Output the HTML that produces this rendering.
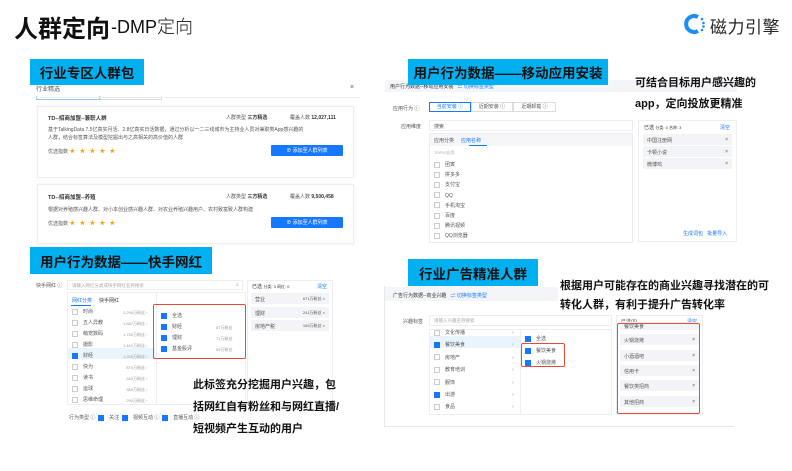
<!DOCTYPE html>
<html><head><meta charset="utf-8"><style>
*{margin:0;padding:0;box-sizing:border-box}
body{width:792px;height:471px;background:#fff;position:relative;overflow:hidden;font-family:"Liberation Sans","Noto Sans CJK SC",sans-serif;color:#333}
.a{position:absolute}
.lbl{position:absolute;background:#00b0f0;color:#111;font-weight:bold;font-size:13.5px;display:flex;align-items:center;justify-content:center}
.t{position:absolute;font-size:5px;color:#555;white-space:nowrap}
.box{position:absolute;border:1px solid #eceef2;background:#fff}
.cb{display:inline-block;width:6px;height:6px;border:1px solid #ccc;vertical-align:middle;margin-right:5px;background:#fff}
.cb.on{background:#1677ff;border-color:#1677ff}
.red{position:absolute;border:1.3px solid #e8493a;border-radius:2px}
.big{position:absolute;font-size:11px;font-weight:bold;color:#111;white-space:nowrap}
.tag{position:absolute;background:#f2f4f7;height:11px;font-size:5px;color:#555;padding:3px 4px}
.star{color:#f5a623;font-size:6px;letter-spacing:4px}
.btn{position:absolute;background:#1677ff;color:#fff;font-size:5px;display:flex;align-items:center;justify-content:center;border-radius:1px}
</style></head><body>

<div class="a" style="left:14px;top:9px;font-size:24px;font-weight:bold;color:#111">人群定向</div>
<div class="a" style="left:111px;top:13px;font-size:18px;color:#111;font-weight:300">-DMP定向</div>
<svg class="a" style="left:683px;top:13px" width="24" height="22" viewBox="0 0 24 22"><path d="M15 4 A8 8 0 1 0 15 18" fill="none" stroke="#1e8ef5" stroke-width="4"/><circle cx="19" cy="6" r="1.3" fill="#1e8ef5"/><circle cx="20.5" cy="10" r="1.3" fill="#1e8ef5"/><circle cx="20.5" cy="13.5" r="1.3" fill="#1e8ef5"/><circle cx="19" cy="17" r="1.3" fill="#1e8ef5"/></svg>
<div class="a" style="left:710px;top:13px;font-size:17px;color:#222;letter-spacing:0.5px">磁力引擎</div>

<!-- panel 1 -->
<div class="t" style="left:36px;top:84px;font-size:6px">行业精选</div>
<div class="t" style="left:350px;top:84px;font-size:7px">×</div>
<div class="a" style="left:36px;top:96px;width:64px;height:4px;border:1px solid #9cc4f0;border-top:none"></div>
<div class="a" style="left:100px;top:96px;width:62px;height:4px;border:1px solid #ddd;border-top:none"></div>
<div class="a" style="left:32px;top:97px;width:328px;height:1px;background:#eee"></div>
<div class="box" style="left:37px;top:106px;width:317px;height:72px;box-shadow:0 0 3px #eee"></div>
<div class="t" style="left:48px;top:114px;font-size:5.5px;color:#333;font-weight:bold">TD--招商加盟--兼职人群</div>
<div class="t" style="left:226px;top:114px">人群类型 <b style="color:#333">三方精选</b></div>
<div class="t" style="left:290px;top:114px">覆盖人数 <b style="color:#333">12,027,111</b></div>
<div class="t" style="left:48px;top:126px">基于TalkingData 7.5亿真实月活、2.8亿真实日活数据，通过分析以一二三线城市为主持业人员对兼职类App感兴趣的</div>
<div class="t" style="left:48px;top:134px">人群，结合标签算法及模型挖掘出与之高相关的高价值的人群</div>
<div class="t" style="left:48px;top:146px">优选指数 <span class="star">★★★★★</span></div>
<div class="btn" style="left:271px;top:145px;width:72px;height:11px">⊕ 添加至人群列表</div>
<div class="box" style="left:37px;top:184px;width:317px;height:60px;box-shadow:0 0 3px #eee"></div>
<div class="t" style="left:48px;top:193px;font-size:5.5px;color:#333;font-weight:bold">TD--招商加盟--养殖</div>
<div class="t" style="left:226px;top:193px">人群类型 <b style="color:#333">三方精选</b></div>
<div class="t" style="left:290px;top:193px">覆盖人数 <b style="color:#333">9,500,458</b></div>
<div class="t" style="left:48px;top:206px">根据对养殖感兴趣人群、对小本创业感兴趣人群、对农业养殖兴趣用户、农村致富致人群构建</div>
<div class="t" style="left:48px;top:218px">优选指数 <span class="star">★★★★★</span></div>
<div class="btn" style="left:271px;top:217px;width:72px;height:11px">⊕ 添加至人群列表</div>
<div class="lbl" style="left:30px;top:59px;width:114px;height:26px">行业专区人群包</div>

<!-- panel 2 -->
<div class="a" style="left:385px;top:80px;width:352px;height:12px;background:#f3f5f9"></div>
<div class="t" style="left:390px;top:83px;color:#333">用户行为数据--移动应用安装 &nbsp; <span style="color:#1677ff">⇌ 切换标签类型</span></div>
<div class="t" style="left:393px;top:105px">应用行为 ⓘ</div>
<div class="a" style="left:429px;top:102px;width:42px;height:10px;border:1px solid #1677ff;font-size:5px;color:#1677ff;text-align:center;line-height:8px">当前安装 ⓘ</div>
<div class="a" style="left:471px;top:102px;width:42px;height:10px;border:1px solid #ddd;font-size:5px;color:#555;text-align:center;line-height:8px">近期安装 ⓘ</div>
<div class="a" style="left:513px;top:102px;width:43px;height:10px;border:1px solid #ddd;font-size:5px;color:#555;text-align:center;line-height:8px">近期卸载 ⓘ</div>
<div class="t" style="left:401px;top:123px">应用维度</div>
<div class="box" style="left:429px;top:120px;width:204px;height:11px"></div>
<div class="t" style="left:434px;top:123px">搜索</div>
<div class="box" style="left:429px;top:133px;width:204px;height:110px"></div>
<div class="a" style="left:430px;top:134px;width:202px;height:12px;background:#f5f6f8"></div>
<div class="t" style="left:434px;top:137px">应用分类 &nbsp; &nbsp; <span style="color:#1677ff">应用名称</span></div>
<div class="a" style="left:469px;top:145px;width:18px;height:1px;background:#1677ff"></div>
<div class="t" style="left:434px;top:150px;color:#aaa;font-size:4px">TOP20应用</div>
<div class="t" style="left:434px;top:160px;line-height:10.2px"><span class="cb"></span>团寅<br><span class="cb"></span>拼多多<br><span class="cb"></span>支付宝<br><span class="cb"></span>QQ<br><span class="cb"></span>手机淘宝<br><span class="cb"></span>百度<br><span class="cb"></span>腾讯视频<br><span class="cb"></span>QQ浏览器</div>
<div class="box" style="left:638px;top:120px;width:99px;height:122px"></div>
<div class="t" style="left:644px;top:124px;color:#333">已选 <span style="font-size:4px">分类: 0 名称: 3</span></div>
<div class="t" style="left:720px;top:124px;color:#1677ff">清空</div>
<div class="tag" style="left:643px;top:134px;width:89px">中国注册网 <span style="float:right">×</span></div>
<div class="tag" style="left:643px;top:146px;width:89px">卡顿小说 <span style="float:right">×</span></div>
<div class="tag" style="left:643px;top:158px;width:89px">微博鸡 <span style="float:right">×</span></div>
<div class="t" style="left:683px;top:230px;color:#1677ff">生成词包 &nbsp; 批量导入</div>
<div class="lbl" style="left:408px;top:59px;width:200px;height:26px">用户行为数据——移动应用安装</div>
<div class="big" style="left:635px;top:74px">可结合目标用户感兴趣的</div>
<div class="big" style="left:635px;top:95px">app，定向投放更精准</div>

<!-- panel 3 -->
<div class="t" style="left:36px;top:282px">快手网红 ⓘ</div>
<div class="box" style="left:67px;top:280px;width:176px;height:10px"></div>
<div class="t" style="left:72px;top:283px;color:#aaa;font-size:4.5px">请输入网红分类或快手网红名称搜索</div>
<div class="t" style="left:236px;top:282px;color:#999">⌕</div>
<div class="box" style="left:67px;top:292px;width:179px;height:113px"></div>
<div class="t" style="left:72px;top:297px;color:#1677ff">网红分类 &nbsp; &nbsp; <span style="color:#333">快手网红</span></div>
<div class="a" style="left:71px;top:305px;width:20px;height:1px;background:#1677ff"></div>
<div class="a" style="left:68px;top:348px;width:87px;height:11px;background:#eaf4fe"></div>
<div class="t" style="left:72px;top:307px;line-height:11px"><span class="cb"></span>时尚<br><span class="cb"></span>五人异教<br><span class="cb"></span>萌宠数码<br><span class="cb"></span>摄影<br><span class="cb on"></span>财经<br><span class="cb"></span>快为<br><span class="cb"></span>读书<br><span class="cb"></span>运球<br><span class="cb"></span>思维命理</div>
<div class="t" style="left:123px;top:307px;line-height:11px;font-size:4px;color:#999;text-align:right">2,295万粉丝 ›<br>1,687万粉丝 ›<br>1,755万粉丝 ›<br>1,441万粉丝 ›<br>1,205万粉丝 ›<br>875万粉丝 ›<br>643万粉丝 ›<br>356万粉丝 ›<br>290万粉丝 ›</div>
<div class="a" style="left:156px;top:293px;width:1px;height:111px;background:#eee"></div>
<div class="red" style="left:153px;top:304px;width:93px;height:55px"></div>
<div class="t" style="left:161px;top:311px;line-height:11px"><span class="cb on"></span>全选<br><span class="cb on"></span>财经<br><span class="cb on"></span>理财<br><span class="cb on"></span>基金股评</div>
<div class="t" style="left:216px;top:322px;line-height:11px;font-size:4px;color:#999">87万粉丝<br>71万粉丝<br>59万粉丝</div>
<div class="box" style="left:247px;top:280px;width:86px;height:125px"></div>
<div class="t" style="left:252px;top:283px;color:#333">已选 <span style="font-size:4px">分类: 3 网红: 0</span></div>
<div class="t" style="left:317px;top:283px;color:#1677ff">清空</div>
<div class="tag" style="left:251px;top:293px;width:78px">营业 <span style="float:right;font-size:4px">671万粉丝 ×</span></div>
<div class="tag" style="left:251px;top:307px;width:78px">理财 <span style="float:right;font-size:4px">241万粉丝 ×</span></div>
<div class="tag" style="left:251px;top:320px;width:78px">房地产税 <span style="float:right;font-size:4px">165万粉丝 ×</span></div>
<div class="t" style="left:69px;top:414px">行为类型 ⓘ &nbsp;<span class="cb on"></span>关注 &nbsp;<span class="cb on"></span>视频互动 ⓘ &nbsp;<span class="cb on"></span>直播互动 ⓘ</div>
<div class="lbl" style="left:30px;top:247px;width:182px;height:27px">用户行为数据——快手网红</div>
<div class="big" style="left:193px;top:376px">此标签充分挖掘用户兴趣，包</div>
<div class="big" style="left:193px;top:398px">括网红自有粉丝和与网红直播/</div>
<div class="big" style="left:193px;top:420px">短视频产生互动的用户</div>

<!-- panel 4 -->
<div class="a" style="left:384px;top:286px;width:1px;height:141px;background:#e6e8ee"></div>
<div class="a" style="left:384px;top:426px;width:350px;height:1px;background:#e6e8ee"></div>
<div class="a" style="left:385px;top:287px;width:348px;height:14px;background:#f3f5f9"></div>
<div class="t" style="left:393px;top:292px;color:#333">广告行为数据--商业兴趣 &nbsp; <span style="color:#1677ff">⇌ 切换标签类型</span></div>
<div class="t" style="left:403px;top:318px">兴趣标签</div>
<div class="box" style="left:429px;top:315px;width:183px;height:11px"></div>
<div class="t" style="left:434px;top:318px;color:#aaa;font-size:4.5px">请输入兴趣名称搜索</div>
<div class="box" style="left:429px;top:329px;width:183px;height:86px"></div>
<div class="a" style="left:430px;top:336px;width:90px;height:12px;background:#eaf4fe"></div>
<div class="t" style="left:434px;top:327px;line-height:12.4px"><span class="cb"></span>文化传播<br><span class="cb on"></span>餐饮美食<br><span class="cb"></span>房地产<br><span class="cb"></span>教育培训<br><span class="cb"></span>服饰<br><span class="cb on"></span>出游<br><span class="cb"></span>食品</div>
<div class="t" style="left:512px;top:327px;line-height:12.4px;color:#999">›<br>›<br>›<br>›<br>›<br>›<br>›</div>
<div class="a" style="left:520px;top:330px;width:1px;height:84px;background:#eee"></div>
<div class="t" style="left:525px;top:333px;line-height:12px"><span class="cb on"></span>全选<br><span class="cb on"></span>餐饮美食<br><span class="cb on"></span>火锅烧烤</div>
<div class="red" style="left:521px;top:343px;width:44px;height:24px"></div>
<div class="box" style="left:616px;top:315px;width:87px;height:100px"></div>
<div class="t" style="left:621px;top:318px">已选(6)</div>
<div class="t" style="left:687px;top:318px;color:#1677ff">清空</div>
<div class="tag" style="left:620px;top:322px;width:79px;height:8px;padding-top:1px">餐饮美食</div>
<div class="tag" style="left:620px;top:334px;width:79px">火锅烧烤 <span style="float:right">×</span></div>
<div class="tag" style="left:620px;top:350px;width:79px">小酒酒吧 <span style="float:right">×</span></div>
<div class="tag" style="left:620px;top:365px;width:79px">信用卡 <span style="float:right">×</span></div>
<div class="tag" style="left:620px;top:380px;width:79px">餐饮类招商 <span style="float:right">×</span></div>
<div class="tag" style="left:620px;top:396px;width:79px">其他招商 <span style="float:right">×</span></div>
<div class="red" style="left:617px;top:323px;width:83px;height:91px"></div>
<div class="lbl" style="left:408px;top:259px;width:130px;height:27px">行业广告精准人群</div>
<div class="a" style="left:558px;top:272px;width:176px;height:40px;background:#fff"></div>
<div class="big" style="left:560px;top:277px">根据用户可能存在的商业兴趣寻找潜在的可</div>
<div class="big" style="left:560px;top:296px">转化人群，有利于提升广告转化率</div>
</body></html>
